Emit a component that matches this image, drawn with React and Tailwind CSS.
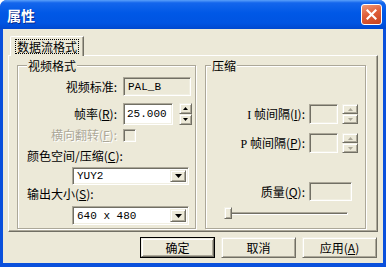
import React from "react";

const raised =
  "border border-t-[#f1efe2] border-l-[#f1efe2] border-r-[#716f64] border-b-[#716f64] shadow-[inset_1px_1px_0_#fff,inset_-1px_-1px_0_#aca899] bg-[#ece9d8]";
const sunken =
  "border border-t-[#aca899] border-l-[#aca899] border-r-white border-b-white shadow-[inset_1px_1px_0_#716f64,inset_-1px_-1px_0_#f1efe2]";
const dis = "text-[#aca899] [text-shadow:1px_1px_0_#fff]";
const mono = "font-['Liberation_Mono',monospace] text-[11px]";

function Arrow({ up, disabled, w = 5, h = 3 }) {
  const color = disabled ? "#aca899" : "#000";
  const pts = up ? `0,${h} ${w / 2},0 ${w},${h}` : `0,0 ${w},0 ${w / 2},${h}`;
  return (
    <svg width={w} height={h} viewBox={`0 0 ${w} ${h}`} className="block">
      <polygon points={pts} fill={color} />
    </svg>
  );
}

function Spin({ disabled, w, hb }) {
  return (
    <div className="flex flex-col" style={{ width: w }}>
      <div className={`${raised} flex items-center justify-center`} style={{ height: hb }}>
        <Arrow up disabled={disabled} />
      </div>
      <div className={`${raised} flex items-center justify-center`} style={{ height: hb }}>
        <Arrow disabled={disabled} />
      </div>
    </div>
  );
}

function Combo({ value, h }) {
  return (
    <div className={`${sunken} bg-white ml-[54px] w-[117px] flex items-stretch p-[2px]`} style={{ height: h }}>
      <div className={`flex-1 pl-[2px] flex items-center ${mono}`}>{value}</div>
      <div className={`${raised} w-[16px] flex items-center justify-center`}>
        <Arrow w={7} h={4} />
      </div>
    </div>
  );
}

function Btn({ children, def }) {
  return (
    <div className={`w-[75px] h-[21px] ${def ? "border border-black" : ""}`}>
      <div className={`${raised} w-full h-full flex items-center justify-center text-[12px]`}>{children}</div>
    </div>
  );
}

export default function App() {
  return (
    <div className="w-[386px] h-[267px] flex flex-col bg-[#0a50dc] rounded-t-[7px] overflow-hidden font-['Noto_Sans_CJK_SC','Liberation_Sans',sans-serif] text-[12px] leading-[14px] text-black select-none">
      {/* title bar */}
      <div className="h-[29px] flex items-center justify-between pl-[7px] pr-[4px] bg-[linear-gradient(180deg,#5aa0fa_0%,#1466ec_10%,#0058e6_45%,#0054e2_80%,#0048cf_100%)]">
        <span className="text-white font-bold text-[14px] leading-[16px] [text-shadow:1px_1px_0_#0a2a8a]">属性</span>
        <div className="w-[21px] h-[21px] rounded-[3px] border border-white bg-[linear-gradient(160deg,#f09a78_0%,#e0603b_45%,#c8431f_100%)] flex items-center justify-center">
          <svg width="11" height="11" viewBox="0 0 11 11">
            <path d="M1.5 1.5 L9.5 9.5 M9.5 1.5 L1.5 9.5" stroke="#fff" strokeWidth="2.2" strokeLinecap="square" />
          </svg>
        </div>
      </div>

      {/* body */}
      <div className="flex-1 px-[3px] pb-[4px] flex">
        <div className="flex-1 bg-[#ece9d8] flex flex-col">
          {/* tab strip */}
          <div className="pt-[7px] pl-[7px] flex">
            <div className="relative z-10 w-[74px] h-[20px] bg-[#ece9d8] border-t border-l border-t-white border-l-white border-r border-r-[#716f64] shadow-[inset_-1px_0_0_#aca899] rounded-tl-[2px] flex items-center justify-center">
              <span className="border border-dotted border-black px-[1px] leading-[13px]">数据流格式</span>
            </div>
          </div>
          {/* tab panel */}
          <div className="-mt-[1px] ml-[5px] w-[370px] h-[177px] border border-t-white border-l-white border-r-[#716f64] border-b-[#716f64] shadow-[inset_-1px_-1px_0_#aca899] flex pl-[8px] pt-[9px] gap-[9px]">
            {/* left groupbox */}
            <div className="relative w-[179px] h-[164px] border border-[#aca899] shadow-[inset_1px_1px_0_#fff,1px_1px_0_#fff] flex flex-col">
              <span className="absolute left-[9px] -top-[7px] bg-[#ece9d8] px-[1px]">视频格式</span>
              <div className="flex items-center mt-[11px]">
                <span className="w-[99px] text-right">视频标准:</span>
                <div className={`${sunken} ml-[6px] w-[68px] h-[19px] flex items-center pl-[4px] ${mono}`}>PAL_B</div>
              </div>
              <div className="flex items-center mt-[7px]">
                <span className="w-[99px] text-right">
                  帧率(<u>R</u>):
                </span>
                <div className={`${sunken} bg-white ml-[6px] w-[50px] h-[22px] flex items-center pl-[3px] ${mono}`}>25.000</div>
                <div className="ml-[6px]">
                  <Spin w={13} hb={11} />
                </div>
              </div>
              <div className="flex items-center mt-[3px]">
                <span className={`w-[99px] text-right ${dis}`}>
                  横向翻转(<u>F</u>):
                </span>
                <div className={`${sunken} ml-[6px] w-[13px] h-[13px] bg-[#ece9d8]`} />
              </div>
              <div className="mt-[7px] pl-[9px]">
                颜色空间/压缩(<u>C</u>):
              </div>
              <div className="mt-[4px]">
                <Combo value="YUY2" h={18} />
              </div>
              <div className="mt-[2px] pl-[9px]">
                输出大小(<u>S</u>):
              </div>
              <div className="mt-[5px]">
                <Combo value="640 x 480" h={19} />
              </div>
            </div>

            {/* right groupbox */}
            <div className="relative w-[161px] h-[164px] border border-[#aca899] shadow-[inset_1px_1px_0_#fff,1px_1px_0_#fff] flex flex-col">
              <span className="absolute left-[5px] -top-[7px] bg-[#ece9d8] px-[1px]">压缩</span>
              <div className="flex items-center mt-[38px]">
                <span className="w-[99px] text-right">
                  <span className="font-['Liberation_Serif',serif]">I</span> 帧间隔(<u>I</u>):
                </span>
                <div className={`${sunken} ml-[4px] w-[29px] h-[20px]`} />
                <div className="ml-[4px]">
                  <Spin disabled w={16} hb={10} />
                </div>
              </div>
              <div className="flex items-center mt-[9px]">
                <span className="w-[99px] text-right">
                  <span className="font-['Liberation_Serif',serif]">P</span> 帧间隔(<u>P</u>):
                </span>
                <div className={`${sunken} ml-[4px] w-[29px] h-[20px]`} />
                <div className="ml-[4px]">
                  <Spin disabled w={16} hb={10} />
                </div>
              </div>
              <div className="flex items-center mt-[29px]">
                <span className="w-[99px] text-right">
                  质量(<u>Q</u>):
                </span>
                <div className={`${sunken} ml-[4px] w-[43px] h-[19px]`} />
              </div>
              <div className="relative mt-[6px] ml-[18px] w-[124px] h-[12px]">
                <div className="mt-[5px] h-[3px] border-t border-l border-t-[#aca899] border-l-[#aca899] border-b border-r border-b-white border-r-white bg-[#716f64]" />
                <div className={`absolute left-0 top-0 w-[8px] h-[12px] ${raised}`} />
              </div>
            </div>
          </div>

          {/* buttons */}
          <div className="mt-[5px] flex justify-end gap-[6px] pr-[6px]">
            <Btn def>确定</Btn>
            <Btn>取消</Btn>
            <Btn>
              应用(<u>A</u>)
            </Btn>
          </div>
        </div>
      </div>
    </div>
  );
}
